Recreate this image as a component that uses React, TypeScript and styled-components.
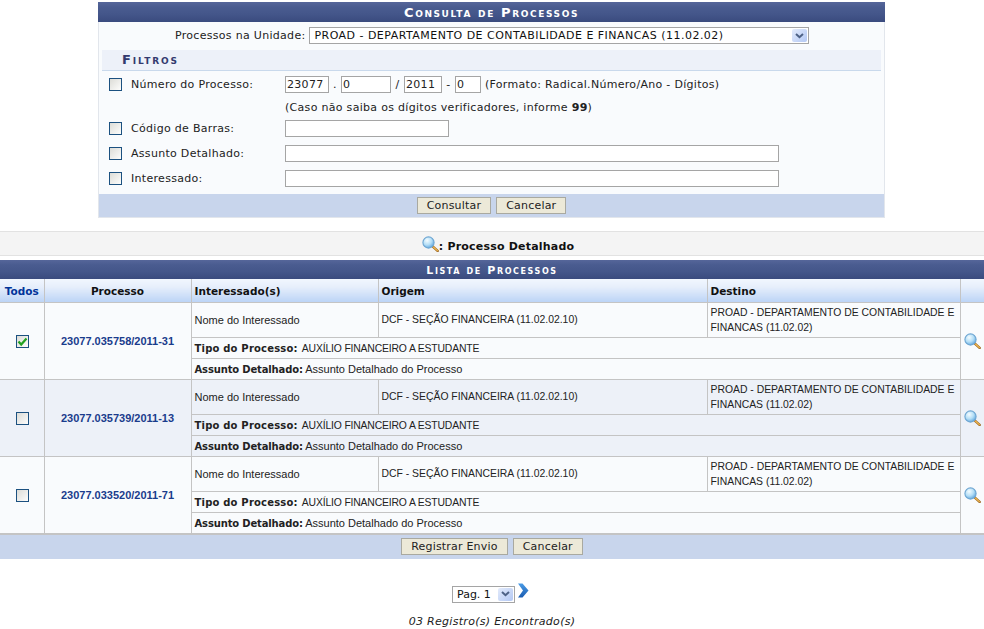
import React from "react";
import styled, { createGlobalStyle, css } from "styled-components";

const Global = createGlobalStyle`
  html, body { margin: 0; padding: 0; background: #fff; }
  body { font-family: "DejaVu Sans", Verdana, sans-serif; font-size: 11px; color: #222; }
  * { box-sizing: border-box; }
`;

const Page = styled.div`
  width: 984px;
  height: 629px;
  overflow: hidden;
  padding-top: 2px;
`;

const barStyle = css`
  background: linear-gradient(#56669a 0%, #4a5c90 25%, #44568a 60%, #3a4b7e 100%);
  color: #fff;
  font-weight: bold;
  font-variant: small-caps;
  text-align: center;
`;

const FormPanel = styled.form`
  width: 787px;
  margin: 0 0 0 98px;
  background: #f9fbfd;
  border: 1px solid #e2e6ec;
  border-top: 0;
  height: 216px;
  display: flex;
  flex-direction: column;
  letter-spacing: 0.3px;
`;

const FormTitle = styled.div`
  ${barStyle}
  height: 20px;
  margin: 0 -1px;
  font-size: 13px;
  line-height: 21px;
  letter-spacing: 1.6px;
`;

const UnitRow = styled.div`
  height: 27px;
  display: flex;
  align-items: center;
  padding: 0 0 0 76px;
  gap: 4px;
  color: #222;
`;

const Select = styled.div<{ $w: number; $ls?: number }>`
  width: ${(p) => p.$w}px;
  height: 17px;
  border: 1px solid #a5a5a5;
  background: #fff;
  display: flex;
  align-items: center;
  justify-content: space-between;
  padding: 0 1px 0 4px;
  font-size: 11px;
  letter-spacing: ${(p) => p.$ls ?? 0}px;
  color: #111;
  white-space: nowrap;
`;

const SelectBtn = styled.span`
  width: 15px;
  height: 13px;
  border-radius: 2px;
  background: linear-gradient(135deg, #e3ebfb, #b3c8f4);
  display: flex;
  align-items: center;
  justify-content: center;
`;

const Section = styled.div`
  margin: 1px 3px 0 3px;
  height: 21px;
  background: #edf1f9;
  border-bottom: 1px solid #c9d9ec;
  font-weight: bold;
  font-variant: small-caps;
  font-size: 13px;
  letter-spacing: 1.9px;
  line-height: 19px;
  color: #333a6e;
  padding-left: 20px;
`;

const Filters = styled.div`
  flex: 1;
  display: flex;
  flex-direction: column;
  padding-top: 2px;
`;

const FilterRow = styled.div<{ $h: number }>`
  height: ${(p) => p.$h}px;
  display: grid;
  grid-template-columns: 22px 154px 1fr;
  align-items: center;
  padding-left: 10px;
`;

const NoteRow = styled(FilterRow)`
  padding-top: 2px;
`;

const Box = styled.span`
  width: 13px;
  height: 13px;
  border: 1px solid #1c5180;
  background: linear-gradient(135deg, #dcdcd7, #fdfdfc);
  display: inline-flex;
  align-items: center;
  justify-content: center;
  vertical-align: middle;
`;

const TableBox = styled(Box)`
  margin: 0 0 0 1px;
`;

const Label = styled.span`
  color: #222;
`;

const Fields = styled.div`
  display: flex;
  align-items: center;
`;

const Input = styled.input<{ $w: number }>`
  width: ${(p) => p.$w}px;
  height: 17px;
  border: 1px solid #a5a5a5;
  background: #fff;
  padding: 0 1px;
  font: 11px "DejaVu Sans", Verdana, sans-serif;
  letter-spacing: 0.3px;
  color: #222;
  outline: 0;
`;

const Sep = styled.span<{ $w: number }>`
  width: ${(p) => p.$w}px;
  text-align: center;
`;

const Hint = styled.span`
  margin-left: 4px;
  white-space: nowrap;
`;

const Footer = styled.div`
  height: 23px;
  flex: none;
  background: #c8d5ec;
  display: flex;
  align-items: center;
  justify-content: center;
  gap: 5px;
`;

const ListFooter = styled(Footer)`
  height: 25px;
  border-top: 1px solid #c4c4c4;
`;

const Btn = styled.button`
  height: 17px;
  padding: 0 9px;
  border: 1px solid #a9a9a0;
  background: #ece9d8;
  font: 11px "DejaVu Sans", Verdana, sans-serif;
  letter-spacing: 0.2px;
  color: #222;
`;

const Legend = styled.div`
  margin-top: 13px;
  height: 25px;
  background: #f4f4f4;
  border-top: 1px solid #e2e2e2;
  border-bottom: 1px solid #e2e2e2;
  display: flex;
  align-items: center;
  justify-content: center;
  font-weight: bold;
  padding: 0 0 0 12px;
  color: #111;
  letter-spacing: 0.2px;
`;

const LegendText = styled.span`
  margin-top: 6px;
  white-space: pre;
`;

const ListTitle = styled.div`
  ${barStyle}
  margin-top: 4px;
  height: 19px;
  font-size: 11px;
  line-height: 21px;
  letter-spacing: 1.6px;
`;

const Table = styled.table`
  width: 984px;
  border-collapse: collapse;
  table-layout: fixed;
  font-family: "Liberation Sans", Arial, sans-serif;
  font-size: 11px;
  color: #222;
`;

const HeadCell = styled.th<{ $center?: boolean; $link?: boolean }>`
  height: 23px;
  padding: 2px 3px 0;
  font: bold 10.5px "DejaVu Sans", Verdana, sans-serif;
  text-align: ${(p) => (p.$center ? "center" : "left")};
  color: ${(p) => (p.$link ? "#003399" : "#111")};
  background: linear-gradient(#f1f6fe, #e6eefb 35%, #bcd4f6);
  border: 1px solid #c4c4c4;
  border-top: 0;
  &:first-child { border-left: 0; }
  &:last-child { border-right: 0; }
`;

const Cell = styled.td<{ $shade?: boolean; $center?: boolean; $h?: number }>`
  height: ${(p) => p.$h ?? 21}px;
  padding: 0 3px;
  background: ${(p) => (p.$shade ? "#edf1f8" : "#f9fbfd")};
  border: 1px solid #c4c4c4;
  text-align: ${(p) => (p.$center ? "center" : "left")};
  vertical-align: middle;
  line-height: 14px;
  &:first-child { border-left: 0; }
  &:last-child { border-right: 0; }
`;

const TypeCell = styled(Cell)`
  padding-top: 2px;
`;

const Caps = styled.span`
  font-size: 10.4px;
`;

const TightCaps = styled(Caps)`
  letter-spacing: -0.17px;
`;

const ProcLink = styled.a`
  font: bold 11px "Liberation Sans", Arial, sans-serif;
  color: #1a3c8c;
  text-decoration: none;
`;

const Strong = styled.b<{ $ls: number; $mr?: number }>`
  font: bold 10px "DejaVu Sans", Verdana, sans-serif;
  letter-spacing: ${(p) => p.$ls}px;
  margin-right: ${(p) => p.$mr ?? 0}px;
`;

const IconFix = styled.span`
  display: inline-flex;
  vertical-align: middle;
`;

const Pager = styled.div`
  margin-top: 24px;
  height: 24px;
  display: flex;
  justify-content: center;
  align-items: flex-start;
  padding-right: 3px;
  gap: 2px;
`;

const PagerSelect = styled.div`
  margin-top: 3px;
`;

const Found = styled.div`
  margin-top: 8px;
  text-align: center;
  font-style: italic;
  font-size: 11px;
  letter-spacing: 0.3px;
  color: #222;
`;

const Chevron = () => (
  <svg width="12" height="15" viewBox="0 0 12 15">
    <defs>
      <linearGradient id="chev" x1="0" y1="0" x2="0" y2="1">
        <stop offset="0" stopColor="#4a9be6" />
        <stop offset="1" stopColor="#1a5cb0" />
      </linearGradient>
    </defs>
    <path d="M1 0.5h4.5l6 7-6 7H1l5-7z" fill="url(#chev)" />
  </svg>
);

const Arrow = () => (
  <svg width="9" height="6" viewBox="0 0 9 6">
    <path d="M1 1l3.5 3.2L8 1" fill="none" stroke="#4d6185" strokeWidth="2" />
  </svg>
);

const Lens: React.FC<{ id: string }> = ({ id }) => (
  <svg width="17" height="16" viewBox="0 0 17 16">
    <defs>
      <radialGradient id={id} cx="38%" cy="32%" r="72%">
        <stop offset="0" stopColor="#f4fcff" />
        <stop offset="0.55" stopColor="#b4def6" />
        <stop offset="1" stopColor="#5ca4de" />
      </radialGradient>
    </defs>
    <path d="M10.6 10.4l5 4.5" stroke="#a06c28" strokeWidth="2.6" strokeLinecap="round" />
    <path d="M11.4 11l4 3.6" stroke="#f4bc50" strokeWidth="1.1" strokeLinecap="round" />
    <circle cx="6.5" cy="6.5" r="5.6" fill={`url(#${id})`} stroke="#6ea6d2" strokeWidth="1.1" />
  </svg>
);

const Check = () => (
  <svg width="11" height="11" viewBox="0 0 11 11">
    <path d="M1.5 5.5l2.7 3L9.5 2.5" fill="none" stroke="#21a121" strokeWidth="2.2" />
  </svg>
);

const rows = [
  { num: "23077.035758/2011-31", checked: true, shade: false },
  { num: "23077.035739/2011-13", checked: false, shade: true },
  { num: "23077.033520/2011-71", checked: false, shade: false },
];

export default function App() {
  return (
    <Page>
      <Global />
      <FormPanel onSubmit={(e) => e.preventDefault()}>
        <FormTitle>Consulta de Processos</FormTitle>
        <UnitRow>
          <Label>Processos na Unidade:</Label>
          <Select $w={500} $ls={0.47}>
            PROAD - DEPARTAMENTO DE CONTABILIDADE E FINANCAS (11.02.02)
            <SelectBtn><Arrow /></SelectBtn>
          </Select>
        </UnitRow>
        <Section>Filtros</Section>
        <Filters>
          <FilterRow $h={23}>
            <Box />
            <Label>Número do Processo:</Label>
            <Fields>
              <Input $w={44} defaultValue="23077" />
              <Sep $w={12}>.</Sep>
              <Input $w={50} defaultValue="0" />
              <Sep $w={13}>/</Sep>
              <Input $w={38} defaultValue="2011" />
              <Sep $w={13}>-</Sep>
              <Input $w={26} defaultValue="0" />
              <Hint>(Formato: Radical.Número/Ano - Dígitos)</Hint>
            </Fields>
          </FilterRow>
          <NoteRow $h={20}>
            <span />
            <span />
            <span>(Caso não saiba os dígitos verificadores, informe <b>99</b>)</span>
          </NoteRow>
          <FilterRow $h={25}>
            <Box />
            <Label>Código de Barras:</Label>
            <Fields><Input $w={164} /></Fields>
          </FilterRow>
          <FilterRow $h={25}>
            <Box />
            <Label>Assunto Detalhado:</Label>
            <Fields><Input $w={494} /></Fields>
          </FilterRow>
          <FilterRow $h={25}>
            <Box />
            <Label>Interessado:</Label>
            <Fields><Input $w={494} /></Fields>
          </FilterRow>
        </Filters>
        <Footer>
          <Btn type="button">Consultar</Btn>
          <Btn type="button">Cancelar</Btn>
        </Footer>
      </FormPanel>

      <Legend>
        <IconFix><Lens id="lg" /></IconFix>
        <LegendText>: Processo Detalhado</LegendText>
      </Legend>
      <ListTitle>Lista de Processos</ListTitle>
      <Table>
        <colgroup>
          <col style={{ width: 44 }} />
          <col style={{ width: 147 }} />
          <col style={{ width: 187 }} />
          <col style={{ width: 329 }} />
          <col style={{ width: 253 }} />
          <col style={{ width: 24 }} />
        </colgroup>
        <thead>
          <tr>
            <HeadCell $center $link>Todos</HeadCell>
            <HeadCell $center>Processo</HeadCell>
            <HeadCell>Interessado(s)</HeadCell>
            <HeadCell>Origem</HeadCell>
            <HeadCell>Destino</HeadCell>
            <HeadCell />
          </tr>
        </thead>
        <tbody>
          {rows.map((r, i) => (
            <React.Fragment key={r.num}>
              <tr>
                <Cell rowSpan={3} $center $shade={r.shade}>
                  <TableBox>{r.checked && <Check />}</TableBox>
                </Cell>
                <Cell rowSpan={3} $center $shade={r.shade}>
                  <ProcLink href="#">{r.num}</ProcLink>
                </Cell>
                <Cell $h={35} $shade={r.shade}>Nome do Interessado</Cell>
                <Cell $h={35} $shade={r.shade}><Caps>DCF - SEÇÃO FINANCEIRA (11.02.02.10)</Caps></Cell>
                <Cell $h={35} $shade={r.shade}><Caps>PROAD - DEPARTAMENTO DE CONTABILIDADE E FINANCAS (11.02.02)</Caps></Cell>
                <Cell rowSpan={3} $center $shade={r.shade}>
                  <IconFix><Lens id={`l${i}`} /></IconFix>
                </Cell>
              </tr>
              <tr>
                <TypeCell colSpan={3} $shade={r.shade}><Strong $ls={0.2} $mr={1}>Tipo do Processo:</Strong> <TightCaps>AUXÍLIO FINANCEIRO A ESTUDANTE</TightCaps></TypeCell>
              </tr>
              <tr>
                <Cell colSpan={3} $shade={r.shade}><Strong $ls={-0.15}>Assunto Detalhado:</Strong> Assunto Detalhado do Processo</Cell>
              </tr>
            </React.Fragment>
          ))}
        </tbody>
      </Table>
      <ListFooter>
        <Btn type="button">Registrar Envio</Btn>
        <Btn type="button">Cancelar</Btn>
      </ListFooter>
      <Pager>
        <PagerSelect>
          <Select $w={63}>Pag. 1<SelectBtn><Arrow /></SelectBtn></Select>
        </PagerSelect>
        <Chevron />
      </Pager>
      <Found>03 Registro(s) Encontrado(s)</Found>
    </Page>
  );
}
